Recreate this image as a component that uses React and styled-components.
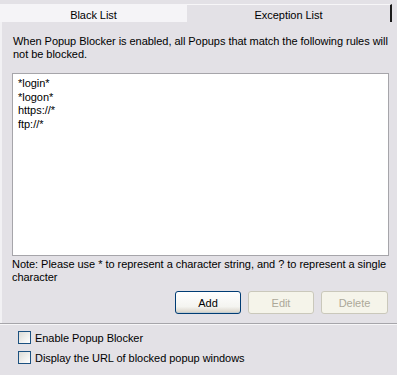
import React from 'react'
import styled, { createGlobalStyle } from 'styled-components'

const Global = createGlobalStyle`
  html, body { margin: 0; padding: 0; }
  body {
    width: 397px;
    height: 375px;
    overflow: hidden;
    background: #e3e1e6;
    font-family: "Liberation Sans", Arial, sans-serif;
    font-size: 11px;
    letter-spacing: -0.04px;
    color: #000;
  }
`

const Window = styled.div`
  width: 397px;
  height: 375px;
  display: flex;
  flex-direction: column;
  background: #e3e1e6;
`

const TabBar = styled.div`
  display: flex;
  height: 22px;
  padding-top: 4px;
  box-sizing: border-box;
`

const Tab = styled.div`
  width: ${p => p.$w}px;
  box-sizing: border-box;
  display: flex;
  align-items: center;
  justify-content: center;
  background: ${p => (p.$active ? '#e3e1e6' : '#f5f4f7')};
  border-top: 1px solid ${p => (p.$active ? '#f7f6f8' : '#f5f4f7')};
  border-right: ${p => (p.$active ? '2px solid #1a1a1a' : 'none')};
  padding-top: 3px;
`

const Panel = styled.div`
  border-left: 2px solid #f2f1f4;
  padding: 13px 8px 0 10px;
  height: 301px;
  box-sizing: border-box;
  display: flex;
  flex-direction: column;
`

const Intro = styled.p`
  margin: 0 0 0 1px;
  line-height: 13px;
  white-space: nowrap;
`

const ListBox = styled.div`
  margin-top: 12px;
  height: 183px;
  box-sizing: border-box;
  border: 1px solid #a6a5aa;
  background: #fff;
  padding: 3px 5px;
  width: 377px;
`

const Item = styled.div`
  line-height: 13.5px;
`

const Note = styled.p`
  margin: 2px 0 0 0;
  line-height: 13px;
  white-space: nowrap;
`

const Buttons = styled.div`
  display: flex;
  justify-content: flex-end;
  gap: 7px;
  margin-top: 7px;
  padding-right: 1px;
`

const Button = styled.button`
  width: ${p => p.$w}px;
  height: 23px;
  box-sizing: border-box;
  border-radius: 3px;
  font-family: inherit;
  font-size: 11px;
  letter-spacing: inherit;
  padding: 0;
  border: 1px solid ${p => (p.disabled ? '#cac8bb' : '#003c74')};
  color: ${p => (p.disabled ? '#aca899' : '#000')};
  background: ${p =>
    p.disabled
      ? '#f5f4ea'
      : 'linear-gradient(#ffffff, #f4f4f0 70%, #d6d0c5)'};
  box-shadow: ${p => (p.disabled ? 'none' : 'inset 0 -1px 0 #c1ccd1')};
`

const Options = styled.div`
  border-top: 1px solid #f7f6f8;
  box-shadow: 0 -1px 0 #a6a5aa;
  margin-top: 1px;
  padding: 6px 0 0 18px;
  display: flex;
  flex-direction: column;
  gap: 7px;
`

const Check = styled.label`
  display: flex;
  align-items: center;
  gap: 4px;
  height: 13px;
`

const Box = styled.span`
  width: 13px;
  height: 13px;
  box-sizing: border-box;
  border: 1px solid #1c5180;
  background: linear-gradient(135deg, #dcdcd7, #ffffff);
`

export default function App() {
  const items = ['*login*', '*logon*', 'https://*', 'ftp://*']
  return (
    <Window>
      <Global />
      <TabBar>
        <Tab $w={187}>Black List</Tab>
        <Tab $w={205} $active>Exception List</Tab>
      </TabBar>
      <Panel>
        <Intro>
          When Popup Blocker is enabled, all Popups that match the following rules will
          <br />
          not be blocked.
        </Intro>
        <ListBox>
          {items.map(i => (
            <Item key={i}>{i}</Item>
          ))}
        </ListBox>
        <Note>
          Note: Please use * to represent a character string, and ? to represent a single
          <br />
          character
        </Note>
        <Buttons>
          <Button $w={66}>Add</Button>
          <Button $w={66} disabled>Edit</Button>
          <Button $w={67} disabled>Delete</Button>
        </Buttons>
      </Panel>
      <Options>
        <Check><Box />Enable Popup Blocker</Check>
        <Check><Box />Display the URL of blocked popup windows</Check>
      </Options>
    </Window>
  )
}
